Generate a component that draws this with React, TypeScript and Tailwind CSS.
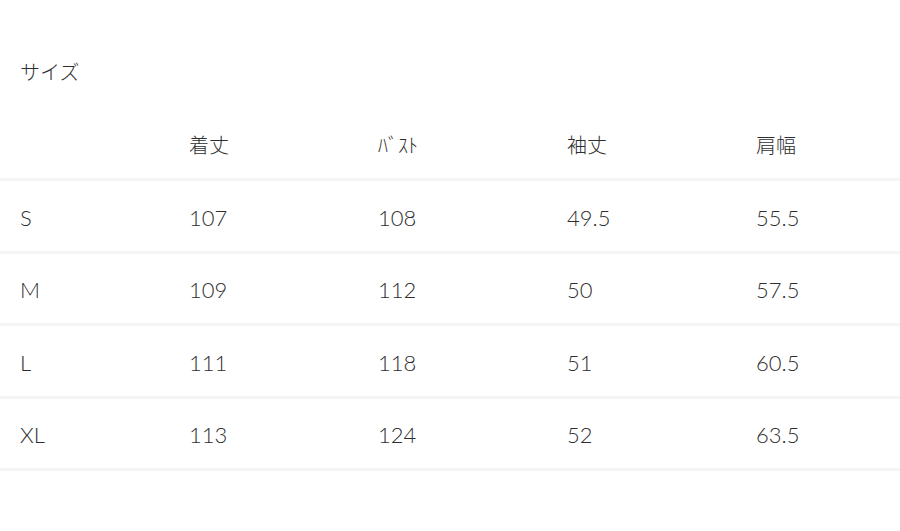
const rows = [
  { size: "S", length: "107", bust: "108", sleeve: "49.5", shoulder: "55.5" },
  { size: "M", length: "109", bust: "112", sleeve: "50", shoulder: "57.5" },
  { size: "L", length: "111", bust: "118", sleeve: "51", shoulder: "60.5" },
  { size: "XL", length: "113", bust: "124", sleeve: "52", shoulder: "63.5" },
];

const heads = ["着丈", "ﾊﾞｽﾄ", "袖丈", "肩幅"];

const App = () => {
  return (
    <div
      className="w-[900px] h-[531px] overflow-hidden bg-white text-[#2e2e2e] font-light"
      style={{ fontFamily: 'Lato, "Noto Sans CJK JP", sans-serif' }}
    >
      <h2 className="pt-[60px] pl-5 text-[20px] leading-6 font-light">サイズ</h2>
      <div className="mt-[24px]">
        <div className="grid grid-cols-[169px_189px_189px_189px_189px] h-[73px] items-center border-b-[3px] border-[#f5f5f5] pl-5 pt-[3px] text-[20px]">
          <div />
          {heads.map((h, i) => (
            <div key={i}>{h}</div>
          ))}
        </div>
        {rows.map((r) => (
          <div
            key={r.size}
            className="grid grid-cols-[169px_189px_189px_189px_189px] h-[72.5px] items-center border-b-[3px] border-[#f5f5f5] pl-5 pt-[3px] text-[22px]"
          >
            <div>{r.size}</div>
            <div>{r.length}</div>
            <div>{r.bust}</div>
            <div>{r.sleeve}</div>
            <div>{r.shoulder}</div>
          </div>
        ))}
      </div>
    </div>
  );
};

export default App;
